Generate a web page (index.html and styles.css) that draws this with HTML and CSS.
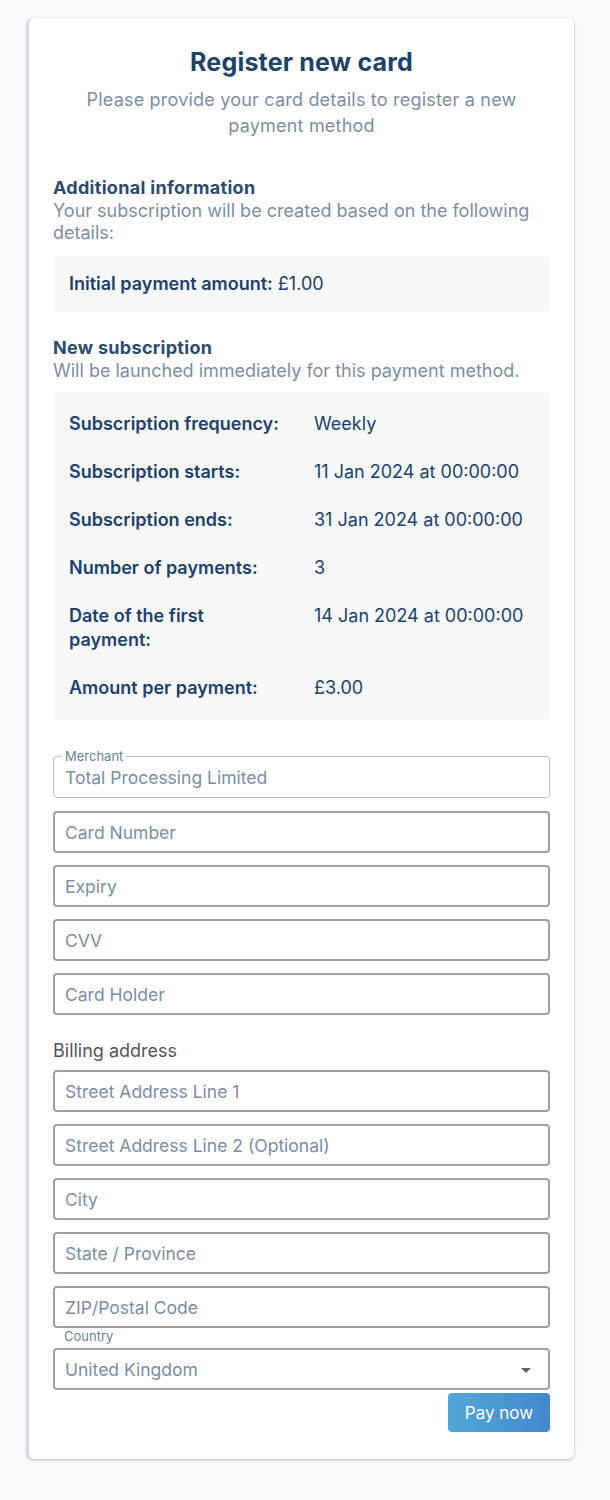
FILE: index.html
```html
<!DOCTYPE html>
<html lang="en">
<head>
<meta charset="utf-8">
<title>Register new card</title>
<link rel="stylesheet" href="styles.css">
</head>
<body>
<div class="card">
  <h1 class="title">Register new card</h1>
  <p class="subtitle">Please provide your card details to register a new payment method</p>

  <section class="section">
    <h2 class="section-title">Additional information</h2>
    <p class="section-sub">Your subscription will be created based on the following details:</p>
    <div class="info-box single">
      <span class="lbl">Initial payment amount:</span> £1.00
    </div>
  </section>

  <section class="section second">
    <h2 class="section-title">New subscription</h2>
    <p class="section-sub">Will be launched immediately for this payment method.</p>
    <div class="info-box grid">
      <div class="lbl">Subscription frequency:</div><div class="val">Weekly</div>
      <div class="lbl">Subscription starts:</div><div class="val">11 Jan 2024 at 00:00:00</div>
      <div class="lbl">Subscription ends:</div><div class="val">31 Jan 2024 at 00:00:00</div>
      <div class="lbl">Number of payments:</div><div class="val">3</div>
      <div class="lbl">Date of the first payment:</div><div class="val">14 Jan 2024 at 00:00:00</div>
      <div class="lbl">Amount per payment:</div><div class="val">£3.00</div>
    </div>
  </section>

  <form class="form">
    <div class="field disabled">
      <span class="legend">Merchant</span>
      <span class="field-value">Total Processing Limited</span>
    </div>
    <div class="inputs">
      <input class="input" type="text" placeholder="Card Number">
      <input class="input" type="text" placeholder="Expiry">
      <input class="input" type="text" placeholder="CVV">
      <input class="input" type="text" placeholder="Card Holder">
    </div>
    <div class="billing-label">Billing address</div>
    <div class="inputs">
      <input class="input" type="text" placeholder="Street Address Line 1">
      <input class="input" type="text" placeholder="Street Address Line 2 (Optional)">
      <input class="input" type="text" placeholder="City">
      <input class="input" type="text" placeholder="State / Province">
      <input class="input" type="text" placeholder="ZIP/Postal Code">
    </div>
    <div class="select-wrap">
      <span class="select-label">Country</span>
      <div class="select">
        <span class="select-value">United Kingdom</span>
        <span class="caret"></span>
      </div>
    </div>
    <div class="actions">
      <button class="btn" type="button">Pay now</button>
    </div>
  </form>
</div>
</body>
</html>
```
FILE: styles.css
```css
* { box-sizing: border-box; }
html, body {
  margin: 0;
  padding: 0;
  background: #f9fafc;
}
body {
  font-family: Inter, "Noto Sans", "Liberation Sans", sans-serif;
  color: #21416a;
  padding: 18px 36px 40px 27px;
}
.card {
  width: 547px;
  background: #fff;
  border-left: 2px solid #d3dbef;
  border-radius: 6px;
  box-shadow: 0 1px 3px rgba(0,0,0,0.28), 0 0 1px rgba(0,0,0,0.06);
  padding: 29px 24px 27px 24px;
}
.title {
  margin: 0;
  text-align: center;
  font-size: 25px;
  line-height: 30px;
  font-weight: 700;
  letter-spacing: 0.2px;
  color: #1e4268;
}
.subtitle {
  margin: 10px auto 0;
  max-width: 470px;
  text-align: center;
  font-size: 18px;
  line-height: 26px;
  letter-spacing: 0.2px;
  color: #7d8ea3;
}
.section { margin-top: 37px; }
.section.second { margin-top: 24px; }
.section-title {
  margin: 0;
  font-size: 18px;
  line-height: 24px;
  font-weight: 700;
  letter-spacing: 0.3px;
  color: #2c4b6e;
}
.section-sub {
  margin: 0;
  font-size: 18px;
  line-height: 22px;
  color: #7d8ea3;
}
.info-box {
  background: #f6f8fa;
  border-radius: 4px;
  font-size: 18px;
  line-height: 24px;
  color: #21416a;
}
.info-box.single {
  margin-top: 12px;
  padding: 16px 16px;
}
.info-box.grid {
  margin-top: 10px;
  padding: 20px 16px;
  display: grid;
  grid-template-columns: 215px 1fr;
  column-gap: 30px;
  row-gap: 24px;
}
.lbl { font-weight: 600; }
.form { margin-top: 36px; }
.field {
  position: relative;
  height: 42px;
  padding: 0 11px;
  border: 1.5px solid #bdbdbd;
  border-radius: 4px;
  display: flex;
  align-items: center;
}
.legend {
  position: absolute;
  top: -8px;
  left: 8px;
  padding: 0 3px;
  background: #fff;
  font-size: 13px;
  line-height: 14px;
  color: #6f7f94;
}
.field-value {
  font-size: 17.5px;
  line-height: 22px;
  color: #7b8ea5;
  margin-top: 2px;
}
.inputs {
  display: flex;
  flex-direction: column;
  gap: 12px;
  margin-top: 13px;
}
.input {
  display: block;
  width: 100%;
  height: 42px;
  margin: 0;
  padding: 0 10px;
  border: 2px solid #a0a0a0;
  border-radius: 4px;
  font-family: inherit;
  font-size: 17.5px;
  color: #21416a;
  background: #fff;
  outline: none;
}
.input::placeholder { color: #7b8ea5; opacity: 1; }
.billing-label {
  margin-top: 24px;
  font-size: 18px;
  line-height: 24px;
  color: #555;
}
.billing-label + .inputs { margin-top: 7px; }
.select-wrap { margin-top: 0; }
.select-label {
  display: block;
  width: max-content;
  margin-left: 9px;
  padding: 0 2px;
  height: 20px;
  font-size: 13px;
  line-height: 16px;
  color: #6f7f94;
}
.select {
  height: 42px;
  border: 2px solid #a0a0a0;
  border-radius: 4px;
  display: flex;
  align-items: center;
  justify-content: space-between;
  padding: 0 17px 0 10px;
}
.select-value {
  font-size: 17.5px;
  color: #7b8ea5;
}
.caret {
  width: 0;
  height: 0;
  border-left: 5px solid transparent;
  border-right: 5px solid transparent;
  border-top: 5px solid #666;
  margin-top: 2px;
}
.actions {
  display: flex;
  justify-content: flex-end;
  margin-top: 3px;
}
.btn {
  width: 102px;
  height: 39px;
  border: 0;
  border-radius: 4px;
  background: linear-gradient(90deg, #53a7d4, #4189d1);
  color: #fff;
  font-family: inherit;
  font-size: 17px;
  padding: 0;
}
```
